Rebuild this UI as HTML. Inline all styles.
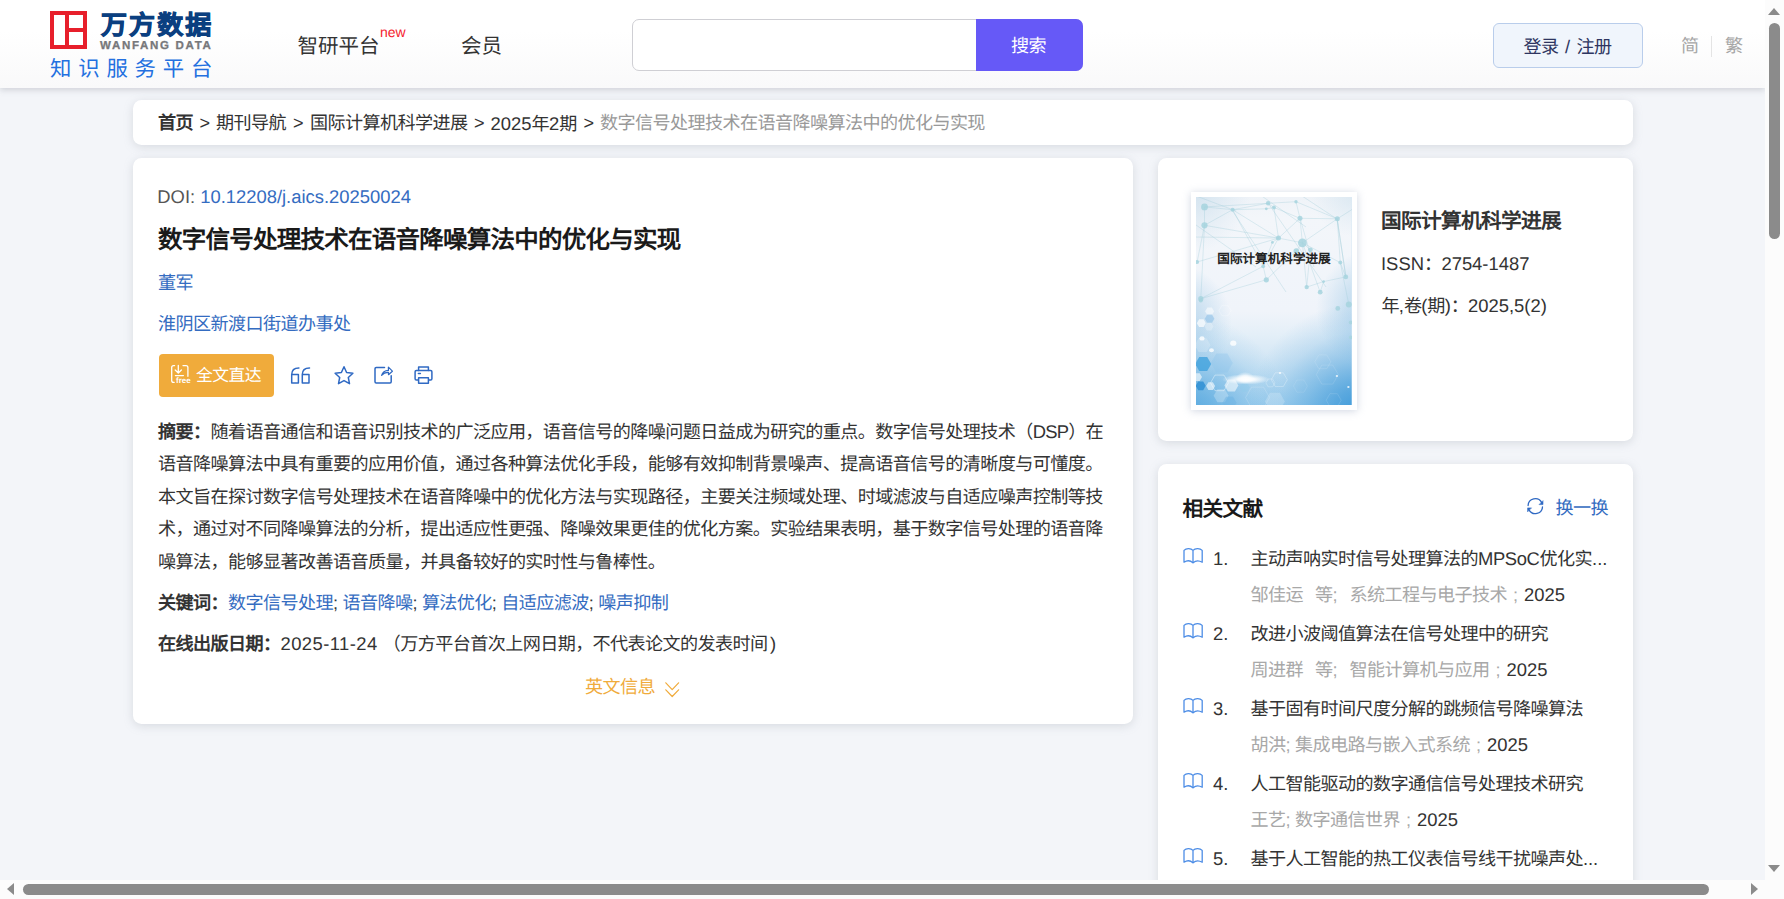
<!DOCTYPE html>
<html lang="zh-CN">
<head>
<meta charset="utf-8">
<title>数字信号处理技术在语音降噪算法中的优化与实现</title>
<style>
*{box-sizing:border-box;margin:0;padding:0}
html,body{width:1784px;height:899px;overflow:hidden}
body{position:relative;text-rendering:geometricPrecision;background:#f3f5f9;font-family:"Liberation Sans",sans-serif;font-size:18.1px;letter-spacing:-.6px;color:#333;line-height:1}
a{text-decoration:none;color:inherit}
.abs{position:absolute}
/* header */
#hdr{position:absolute;left:0;top:0;width:1765px;height:88px;background:linear-gradient(#ffffff,#ffffff 35%,#f9f9fa);box-shadow:0 2px 6px rgba(100,105,120,.25)}
.t{position:absolute;white-space:nowrap}
.card{position:absolute;background:#fff;border-radius:8.5px;box-shadow:0 2px 10px rgba(140,146,160,.27)}
.blue{color:#346cc1}
.b{font-weight:bold}

.l{font-size:18.4px;letter-spacing:0}
.bc{position:absolute;top:0;line-height:47px;white-space:nowrap}
.sep{position:absolute;top:0;line-height:46.5px;width:24px;text-align:center}
.ab{position:absolute;left:25px;white-space:nowrap;line-height:32.5px;height:32.5px}
.lab{font-weight:bold;color:#333}
.kw{color:#346cc1}
/* scrollbars */
#vs{position:absolute;left:1765px;top:0;width:19px;height:880px;background:#fcfcfc}
#hs{position:absolute;left:0;top:880px;width:1784px;height:19px;background:#fcfcfc}
.thumb{position:absolute;background:#8b8b8b;border-radius:6px}
.tri{position:absolute;width:0;height:0}
</style>
</head>
<body>
<div id="hdr">
 <div class="abs" style="left:50px;top:11px;width:37px;height:38px;border:4px solid #e71f2b;background:#fff">
  <div class="abs" style="left:11px;top:0;width:4px;height:30px;background:#e71f2b"></div>
  <div class="abs" style="left:15px;top:13px;width:14px;height:4px;background:#e71f2b"></div>
 </div>
 <div class="t" id="lg1" style="left:101px;top:7.2px;font-size:26px;line-height:36px;font-weight:900;color:#0b3f80;letter-spacing:2.1px;-webkit-text-stroke:.9px #0b3f80">万方数据</div>
 <div class="t" id="lg2" style="left:100px;top:38.5px;font-size:11.5px;line-height:14px;font-weight:bold;color:#77787b;letter-spacing:1.7px;-webkit-text-stroke:.3px #77787b">WANFANG DATA</div>
 <div class="t" id="lg3" style="left:50px;top:55.4px;font-size:21.4px;line-height:28px;color:#2370e0;letter-spacing:6.8px">知识服务平台</div>
 <div class="t" id="nv1" style="letter-spacing:0;left:297.5px;top:33px;font-size:20.5px;line-height:28px;color:#333">智研平台</div>
 <div class="t" id="nv1n" style="letter-spacing:0;left:380px;top:24px;font-size:14px;line-height:16px;color:#f5222d">new</div>
 <div class="t" id="nv2" style="letter-spacing:0;left:461px;top:33px;font-size:20.5px;line-height:28px;color:#333">会员</div>
 <div class="abs" style="left:632px;top:19px;width:451px;height:52px;border:1px solid #cfcfd4;border-radius:7px;background:#fff"></div>
 <div class="abs" style="left:976px;top:19px;width:107px;height:52px;background:#6659f7;border-radius:0 7px 7px 0"></div>
 <div class="t" id="sbt" style="left:1011px;top:33px;font-size:18.1px;line-height:26px;color:#fff">搜索</div>
 <div class="abs" style="left:1493px;top:23px;width:150px;height:45px;border:1px solid #b9cdeb;border-radius:6px;background:#f0f5fc"></div>
 <div class="t" id="lgn" style="left:1523.5px;top:34.2px;font-size:18.1px;line-height:26px;color:#2e3561;word-spacing:2px">登录 <span class="l">/</span> 注册</div>
 <div class="t" id="jf1" style="left:1681px;top:33px;font-size:18.1px;line-height:26px;color:#a6a6a6">简</div>
 <div class="abs" style="left:1711px;top:36px;width:1px;height:21px;background:#e4e4e4"></div>
 <div class="t" id="jf2" style="left:1725px;top:33px;font-size:18.1px;line-height:26px;color:#a6a6a6">繁</div>
</div>

<div class="card" id="bcd" style="left:133px;top:100px;width:1500px;height:45px;color:#333">
 <span class="bc b" style="left:25px;color:#333">首页</span><span class="sep" style="left:59.5px">&gt;</span>
 <span class="bc" style="left:83px">期刊导航</span><span class="sep" style="left:153px">&gt;</span>
 <span class="bc" style="left:177px">国际计算机科学进展</span><span class="sep" style="left:334px">&gt;</span>
 <span class="bc" style="left:357.5px"><span class="l">2025</span>年<span class="l">2</span>期</span><span class="sep" style="left:443.5px">&gt;</span>
 <span class="bc" style="left:467px;color:#999">数字信号处理技术在语音降噪算法中的优化与实现</span>
</div>

<div class="card" id="mc" style="left:133px;top:158px;width:1000px;height:565.6px">
 <div class="ab" id="doi" style="top:23px;left:24.3px"><span class="l" style="color:#555">DOI: </span><span class="l blue">10.12208/j.aics.20250024</span></div>
 <div class="ab b" id="ttl" style="top:62.5px;font-size:24.5px;letter-spacing:-.75px;line-height:40px;height:40px;color:#1a1a1a">数字信号处理技术在语音降噪算法中的优化与实现</div>
 <div class="ab blue" id="au" style="top:109px">董军</div>
 <div class="ab blue" id="af" style="top:150px">淮阴区新渡口街道办事处</div>
 <div class="abs" id="btn" style="left:26px;top:196px;width:115px;height:43px;background:#f0ab3b;border-radius:4px"></div>
 <div class="t b" id="fre" style="letter-spacing:0;left:43px;top:218px;font-size:8px;line-height:10px;color:#fff">free</div>
 <div class="t" id="btt" style="left:63px;top:205px;font-size:16.8px;letter-spacing:-.55px;line-height:26px;color:#fff">全文直达</div>
 <div class="ab" id="a1" style="top:257.5px"><span class="lab">摘要：</span>随着语音通信和语音识别技术的广泛应用，语音信号的降噪问题日益成为研究的重点。数字信号处理技术（<span class="l" style="letter-spacing:-.8px">DSP</span>）在</div>
 <div class="ab" id="a2" style="top:290px">语音降噪算法中具有重要的应用价值，通过各种算法优化手段，能够有效抑制背景噪声、提高语音信号的清晰度与可懂度。</div>
 <div class="ab" id="a3" style="top:322.5px">本文旨在探讨数字信号处理技术在语音降噪中的优化方法与实现路径，主要关注频域处理、时域滤波与自适应噪声控制等技</div>
 <div class="ab" id="a4" style="top:355px">术，通过对不同降噪算法的分析，提出适应性更强、降噪效果更佳的优化方案。实验结果表明，基于数字信号处理的语音降</div>
 <div class="ab" id="a5" style="top:387.5px">噪算法，能够显著改善语音质量，并具备较好的实时性与鲁棒性。</div>
 <div class="ab" id="kwd" style="top:428.5px;word-spacing:.6px"><span class="lab">关键词：</span><span class="kw">数字信号处理</span>; <span class="kw">语音降噪</span>; <span class="kw">算法优化</span>; <span class="kw">自适应滤波</span>; <span class="kw">噪声抑制</span></div>
 <div class="ab" id="pd" style="top:470px"><span class="lab">在线出版日期：</span><span class="l" style="letter-spacing:.45px">2025-11-24</span><span style="margin-left:5px">（</span>万方平台首次上网日期，不代表论文的发表时间<span class="l" style="margin-left:2.5px">)</span></div>
 <div class="t" id="en" style="left:452px;top:513px;line-height:32.5px;color:#f0ab3b">英文信息</div>
</div>

<div class="card" id="rc1" style="left:1158px;top:158px;width:475px;height:283px">
 <div class="abs" id="cov" style="left:33px;top:34px;width:166px;height:218px;background:#fff;box-shadow:0 1px 8px rgba(150,165,190,.45)">
  <div class="abs" id="covi" style="left:5.2px;top:4.6px;width:155.6px;height:208.4px;overflow:hidden;background:#cfe4f2"><svg class="abs" style="left:0;top:0" width="155.6" height="208.4" viewBox="0 0 155.6 208.4"><defs><linearGradient id="cg0" x1="0" y1="0" x2="0" y2="1"><stop offset="0" stop-color="#eff3f8"/><stop offset=".1" stop-color="#f3f6fa"/><stop offset=".55" stop-color="#f0f4fa"/><stop offset=".66" stop-color="#e4eff8"/><stop offset=".77" stop-color="#d4e7f5"/><stop offset=".926" stop-color="#b7daf1"/><stop offset="1" stop-color="#a8d3ef"/></linearGradient><radialGradient id="cg1" gradientUnits="userSpaceOnUse" cx="166" cy="220" r="115"><stop offset="0" stop-color="#3a97d8" stop-opacity="1"/><stop offset="0.25" stop-color="#3a97d8" stop-opacity="0.74"/><stop offset="0.5" stop-color="#3a97d8" stop-opacity="0.42"/><stop offset="0.75" stop-color="#3a97d8" stop-opacity="0.15"/><stop offset="1" stop-color="#3a97d8" stop-opacity="0"/></radialGradient><radialGradient id="cg2" gradientUnits="userSpaceOnUse" cx="-8" cy="218" r="100"><stop offset="0" stop-color="#58a9df" stop-opacity="1"/><stop offset="0.25" stop-color="#58a9df" stop-opacity="0.74"/><stop offset="0.5" stop-color="#58a9df" stop-opacity="0.42"/><stop offset="0.75" stop-color="#58a9df" stop-opacity="0.15"/><stop offset="1" stop-color="#58a9df" stop-opacity="0"/></radialGradient><radialGradient id="cg4" gradientUnits="userSpaceOnUse" cx="-22" cy="125" r="58"><stop offset="0" stop-color="#b5d5ec" stop-opacity="1"/><stop offset="0.5" stop-color="#b5d5ec" stop-opacity="0.6"/><stop offset="1" stop-color="#b5d5ec" stop-opacity="0"/></radialGradient><radialGradient id="cg5" gradientUnits="userSpaceOnUse" cx="180" cy="112" r="60"><stop offset="0" stop-color="#b2d4ec" stop-opacity="1"/><stop offset="0.5" stop-color="#b2d4ec" stop-opacity="0.6"/><stop offset="1" stop-color="#b2d4ec" stop-opacity="0"/></radialGradient><radialGradient id="cg6" gradientUnits="userSpaceOnUse" cx="-5" cy="-5" r="60"><stop offset="0" stop-color="#cfe1ee" stop-opacity="0.9"/><stop offset="1" stop-color="#cfe1ee" stop-opacity="0"/></radialGradient><radialGradient id="cg7" gradientUnits="userSpaceOnUse" cx="160" cy="-5" r="45"><stop offset="0" stop-color="#d5e5f0" stop-opacity="0.8"/><stop offset="1" stop-color="#d5e5f0" stop-opacity="0"/></radialGradient><radialGradient id="cg3" cx=".5" cy=".5" r=".5"><stop offset="0" stop-color="#fff"/><stop offset=".35" stop-color="#fff" stop-opacity=".9"/><stop offset="1" stop-color="#fff" stop-opacity="0"/></radialGradient></defs><rect width="155.6" height="208.4" fill="url(#cg0)"/><rect width="155.6" height="208.4" fill="url(#cg6)"/><rect width="155.6" height="208.4" fill="url(#cg7)"/><rect width="155.6" height="208.4" fill="url(#cg4)"/><rect width="155.6" height="208.4" fill="url(#cg5)"/><rect width="155.6" height="208.4" fill="url(#cg2)"/><rect width="155.6" height="208.4" fill="url(#cg1)"/><g stroke="#9ccbd8" stroke-opacity=".33" stroke-width="1" fill="none"><path d="M8.5 9.9 L36.6 12.7 M8.5 9.9 L8.5 28.3 M8.5 28.3 L36.6 12.7 M36.6 12.7 L72.1 6.3 M36.6 12.7 L70.3 11.8 M72.1 6.3 L78.0 10.5 M78.0 10.5 L70.3 11.8 M72.1 6.3 L100.0 4.7 M78.0 10.5 L104.0 21.3 M100.0 4.7 L104.0 21.3 M104.0 21.3 L141.3 21.8 M100.0 4.7 L141.3 21.8 M36.6 12.7 L82.5 41.1 M8.5 28.3 L82.5 41.1 M78.0 10.5 L82.5 41.1 M104.0 21.3 L82.5 41.1 M82.5 41.1 L76.4 45.4 M82.5 41.1 L106.4 45.8 M104.0 21.3 L106.4 45.8 M141.3 21.8 L106.4 45.8 M106.4 45.8 L114.4 52.8 M106.4 45.8 L100.3 54.0 M82.5 41.1 L67.2 69.3 M36.6 12.7 L67.2 69.3 M76.4 45.4 L67.2 69.3 M67.2 69.3 L4.8 101.7 M8.5 28.3 L1.1 65.0 M1.1 65.0 L82.5 41.1 M106.4 45.8 L110.7 90.1 M106.4 45.8 L124.2 95.2 M110.7 90.1 L127.6 84.6 M124.2 95.2 L127.6 84.6 M127.6 84.6 L149.8 79.9 M149.8 79.9 L144.3 65.6 M141.3 21.8 L144.3 65.6 M106.4 45.8 L144.3 65.6 M144.3 65.6 L152.8 107.4 M114.4 52.8 L110.7 90.1 M70.3 82.8 L67.2 69.3 M4.8 101.7 L70.3 82.8 M8.5 9.9 L72.1 6.3 M8.5 28.3 L4.8 101.7 M141.3 21.8 L149.8 79.9 M100.3 54.0 L70.3 82.8 M-5.0 -3.0 L40.0 14.0 M60.0 -5.0 L110.0 30.0 M100.0 -5.0 L141.0 22.0 M141.0 22.0 L160.0 10.0 M36.0 13.0 L90.0 95.0 M72.0 6.0 L130.0 90.0 M104.0 21.0 L118.0 70.0 M141.0 22.0 L150.0 80.0 M-3.0 40.0 L82.0 41.0 M0.0 28.0 L60.0 70.0"/></g><g fill="#a6d3de" fill-opacity=".85"><circle cx="8.5" cy="9.9" r="3.4"/><circle cx="8.5" cy="28.3" r="3.1"/><circle cx="36.6" cy="12.7" r="2.0"/><circle cx="72.1" cy="6.3" r="2.2"/><circle cx="78.0" cy="10.5" r="1.9"/><circle cx="70.3" cy="11.8" r="1.4"/><circle cx="100.0" cy="4.7" r="1.7"/><circle cx="104.0" cy="21.3" r="2.5"/><circle cx="141.3" cy="21.8" r="2.5"/><circle cx="82.5" cy="41.1" r="2.5"/><circle cx="76.4" cy="45.4" r="1.4"/><circle cx="106.4" cy="45.8" r="4.4"/><circle cx="100.3" cy="54.0" r="2.8"/><circle cx="114.4" cy="52.8" r="2.4"/><circle cx="70.3" cy="82.8" r="2.6"/><circle cx="110.7" cy="90.1" r="2.2"/><circle cx="124.2" cy="95.2" r="2.4"/><circle cx="127.6" cy="84.6" r="1.4"/><circle cx="149.8" cy="79.9" r="2.4"/><circle cx="144.3" cy="65.6" r="2.0"/><circle cx="67.2" cy="69.3" r="1.9"/><circle cx="1.1" cy="65.0" r="2.0"/><circle cx="4.8" cy="101.7" r="2.6"/><circle cx="152.8" cy="107.4" r="3.0"/><circle cx="141.8" cy="111.4" r="2.4"/><circle cx="154.8" cy="125.4" r="2.0"/><circle cx="154.8" cy="140.4" r="1.8"/><circle cx="4.8" cy="103.4" r="2.0"/></g><polygon points="18.1,114.3 15.9,118.2 11.4,118.2 9.1,114.3 11.4,110.4 15.9,110.4" fill="#fff" fill-opacity="0.55"/><polygon points="18.4,121.7 16.0,125.8 11.2,125.8 8.8,121.7 11.2,117.5 16.0,117.5" fill="#8fc1e8" fill-opacity="0.60"/><polygon points="9.8,126.2 7.6,130.1 3.1,130.1 0.8,126.2 3.1,122.3 7.6,122.3" fill="#fff" fill-opacity="0.70"/><polygon points="17.5,129.6 15.2,133.5 10.7,133.5 8.5,129.6 10.7,125.7 15.2,125.7" fill="#fff" fill-opacity="0.25"/><polygon points="14.6,148.2 10.6,155.1 2.6,155.1 -1.4,148.2 2.6,141.2 10.6,141.2" fill="#fff" fill-opacity="0.20"/><polygon points="15.2,167.0 11.2,173.9 3.2,173.9 -0.8,167.0 3.2,160.0 11.2,160.0" fill="#3a9fdc" fill-opacity="0.75"/><polygon points="36.8,166.1 31.3,175.6 20.3,175.6 14.8,166.1 20.3,156.5 31.3,156.5" fill="#8cc4ea" fill-opacity="0.35"/><polygon points="6.0,180.1 3.7,184.0 -0.8,184.0 -3.0,180.1 -0.8,176.2 3.7,176.2" fill="#fff" fill-opacity="0.60"/><polygon points="9.7,188.8 7.2,193.2 2.2,193.2 -0.3,188.8 2.2,184.5 7.2,184.5" fill="#2f8fd4" fill-opacity="0.85"/><polygon points="19.1,189.1 16.9,193.0 12.4,193.0 10.1,189.1 12.4,185.2 16.9,185.2" fill="#fff" fill-opacity="0.60"/><polygon points="42.4,188.5 38.9,194.5 31.9,194.5 28.4,188.5 31.9,182.4 38.9,182.4" fill="#fff" fill-opacity="0.55"/><polygon points="32.6,198.7 28.9,205.2 21.4,205.2 17.6,198.7 21.4,192.2 28.9,192.2" fill="#fff" fill-opacity="0.25"/><polygon points="40.5,205.7 37.0,211.8 30.0,211.8 26.5,205.7 30.0,199.7 37.0,199.7" fill="#6db4e4" fill-opacity="0.50"/><polygon points="88.9,204.4 83.9,213.1 73.9,213.1 68.9,204.4 73.9,195.8 83.9,195.8" fill="#fff" fill-opacity="0.20"/><polygon points="53.8,190.4 51.3,194.7 46.3,194.7 43.8,190.4 46.3,186.0 51.3,186.0" fill="#8fcaec" fill-opacity="0.40"/><polygon points="32.5,185.9 28.0,193.7 19.0,193.7 14.5,185.9 19.0,178.1 28.0,178.1" fill="none" stroke="#fff" stroke-opacity="0.50" stroke-width=".8"/><polygon points="91.3,182.7 87.3,189.6 79.3,189.6 75.3,182.7 79.3,175.8 87.3,175.8" fill="none" stroke="#fff" stroke-opacity="0.35" stroke-width=".8"/><polygon points="78.9,185.9 76.6,189.8 72.1,189.8 69.9,185.9 72.1,182.0 76.6,182.0" fill="none" stroke="#fff" stroke-opacity="0.30" stroke-width=".8"/><polygon points="73.6,200.6 67.6,211.0 55.6,211.0 49.6,200.6 55.6,190.2 67.6,190.2" fill="none" stroke="#fff" stroke-opacity="0.20" stroke-width=".8"/><polygon points="134.8,164.8 130.8,171.7 122.8,171.7 118.8,164.8 122.8,157.9 130.8,157.9" fill="none" stroke="#fff" stroke-opacity="0.15" stroke-width=".8"/><polygon points="142.3,177.6 136.8,187.1 125.8,187.1 120.3,177.6 125.8,168.1 136.8,168.1" fill="none" stroke="#fff" stroke-opacity="0.15" stroke-width=".8"/><polygon points="111.4,189.1 107.9,195.2 100.9,195.2 97.4,189.1 100.9,183.0 107.9,183.0" fill="none" stroke="#fff" stroke-opacity="0.12" stroke-width=".8"/><polygon points="145.2,203.2 141.4,209.7 133.9,209.7 130.2,203.2 133.9,196.7 141.4,196.7" fill="none" stroke="#fff" stroke-opacity="0.15" stroke-width=".8"/><polygon points="35.0,113.6 32.0,118.8 26.0,118.8 23.0,113.6 26.0,108.4 32.0,108.4" fill="none" stroke="#fff" stroke-opacity="0.30" stroke-width=".8"/><ellipse cx="6.0" cy="141.4" rx="2.6" ry="2.2" fill="#fff" fill-opacity=".8"/><ellipse cx="15.5" cy="153.3" rx="2.4" ry="2.0" fill="#fff" fill-opacity=".8"/><ellipse cx="37.3" cy="146.2" rx="3.1" ry="2.6" fill="#fff" fill-opacity=".8"/><ellipse cx="140.9" cy="179.1" rx="1.2" ry="1.0" fill="#fff" fill-opacity=".8"/><ellipse cx="152.4" cy="190.1" rx="1.2" ry="1.0" fill="#fff" fill-opacity=".8"/><ellipse cx="84.0" cy="176.1" rx="1.2" ry="1.0" fill="#fff" fill-opacity=".8"/><ellipse cx="50.1" cy="182.4" rx="24" ry="5.2" fill="url(#cg3)"/><ellipse cx="49.1" cy="180.9" rx="9" ry="6" fill="url(#cg3)" fill-opacity=".8"/></svg></div>
  <div class="t b" id="covt" style="letter-spacing:0;left:0;width:166px;text-align:center;top:57.3px;font-size:12.6px;line-height:20px;color:#222">国际计算机科学进展</div>
 </div>
 <div class="t b" id="jt" style="left:223px;top:48.8px;font-size:20.7px;letter-spacing:-.7px;line-height:30px;color:#333">国际计算机科学进展</div>
 <div class="t" id="issn" style="left:223px;top:90.7px;line-height:30px"><span class="l">ISSN</span>：<span class="l">2754-1487</span></div>
 <div class="t" id="yv" style="left:223.5px;top:133px;line-height:30px;letter-spacing:-.8px">年<span class="l">,</span>卷<span class="l">(</span>期<span class="l">)</span>：<span class="l">2025,5(2)</span></div>
</div>

<div class="card" id="rc2" style="left:1158px;top:464px;width:475px;height:440px"><div class="abs" style="left:0;top:1px">
 <div class="t b" id="rt" style="left:24.5px;top:30px;font-size:20.7px;letter-spacing:-.7px;line-height:30px;color:#1a1a1a">相关文献</div>
 <div class="t l" style="left:55px;top:77.5px;line-height:32.5px">1.</div>
 <div class="t" style="left:92.5px;top:77.5px;line-height:32.5px;color:#333">主动声呐实时信号处理算法的<span class="l" style="letter-spacing:-.35px">MPSoC</span>优化实<span class="l">...</span></div>
 <div class="t" style="left:92.5px;top:114.2px;line-height:32.5px;color:#a8a8a8">邹佳运</div>
 <div class="t" style="left:157.0px;top:114.2px;line-height:32.5px;color:#a8a8a8">等<span class="l">;</span></div>
 <div class="t" style="left:191.5px;top:114.2px;line-height:32.5px;color:#a8a8a8">系统工程与电子技术</div>
 <div class="t" style="left:355.0px;top:114.2px;line-height:32.5px;color:#a8a8a8">;</div>
 <div class="t l" style="left:366.0px;top:114.2px;line-height:32.5px;color:#333">2025</div>
 <div class="t l" style="left:55px;top:152.5px;line-height:32.5px">2.</div>
 <div class="t" style="left:92.5px;top:152.5px;line-height:32.5px;color:#333">改进小波阈值算法在信号处理中的研究</div>
 <div class="t" style="left:92.5px;top:189.2px;line-height:32.5px;color:#a8a8a8">周进群</div>
 <div class="t" style="left:157.0px;top:189.2px;line-height:32.5px;color:#a8a8a8">等<span class="l">;</span></div>
 <div class="t" style="left:191.5px;top:189.2px;line-height:32.5px;color:#a8a8a8">智能计算机与应用</div>
 <div class="t" style="left:337.5px;top:189.2px;line-height:32.5px;color:#a8a8a8">;</div>
 <div class="t l" style="left:348.5px;top:189.2px;line-height:32.5px;color:#333">2025</div>
 <div class="t l" style="left:55px;top:227.5px;line-height:32.5px">3.</div>
 <div class="t" style="left:92.5px;top:227.5px;line-height:32.5px;color:#333">基于固有时间尺度分解的跳频信号降噪算法</div>
 <div class="t" style="left:92.5px;top:264.2px;line-height:32.5px;color:#a8a8a8">胡洪<span class="l">;</span></div>
 <div class="t" style="left:137.0px;top:264.2px;line-height:32.5px;color:#a8a8a8">集成电路与嵌入式系统</div>
 <div class="t" style="left:318.0px;top:264.2px;line-height:32.5px;color:#a8a8a8">;</div>
 <div class="t l" style="left:329.0px;top:264.2px;line-height:32.5px;color:#333">2025</div>
 <div class="t l" style="left:55px;top:302.5px;line-height:32.5px">4.</div>
 <div class="t" style="left:92.5px;top:302.5px;line-height:32.5px;color:#333">人工智能驱动的数字通信信号处理技术研究</div>
 <div class="t" style="left:92.5px;top:339.2px;line-height:32.5px;color:#a8a8a8">王艺<span class="l">;</span></div>
 <div class="t" style="left:137.0px;top:339.2px;line-height:32.5px;color:#a8a8a8">数字通信世界</div>
 <div class="t" style="left:248.0px;top:339.2px;line-height:32.5px;color:#a8a8a8">;</div>
 <div class="t l" style="left:259.0px;top:339.2px;line-height:32.5px;color:#333">2025</div>
 <div class="t l" style="left:55px;top:377.5px;line-height:32.5px">5.</div>
 <div class="t" style="left:92.5px;top:377.5px;line-height:32.5px;color:#333">基于人工智能的热工仪表信号线干扰噪声处<span class="l">...</span></div>
 <div class="t blue" id="hyh" style="left:397.5px;top:28.2px;line-height:30px">换一换</div>
</div></div>

<svg class="abs" style="left:0;top:0;pointer-events:none" width="1766" height="881" viewBox="0 0 1766 881" fill="none" stroke-linecap="round" stroke-linejoin="round">
 <g stroke="#fff" stroke-width="1.3">
  <path d="M174.6 365.6 H173.6 Q171.7 365.6 171.7 367.5 V380.4 Q171.7 382.3 173.6 382.3 H174.2"/>
  <path d="M183 365.6 H186 Q187.9 365.6 187.9 367.5 V376.3"/>
  <path d="M178.3 365.4 V372.8 M175.2 370 L178.3 373 L181.4 370 M175.4 375.6 H183.4"/>
 </g>
 <g stroke="#2f69c3" stroke-width="1.5">
  <path d="M298.9 367.9 Q291.7 367.9 291.7 374.6 V382.9 H298.4 V374.6 H291.7"/>
  <path d="M309.5 367.9 Q302.3 367.9 302.3 374.6 V382.9 H309 V374.6 H302.3"/>
  <path d="M344.0 366.7 L346.6 372.5 L352.9 373.2 L348.3 377.5 L349.5 383.7 L344.0 380.6 L338.5 383.7 L339.7 377.5 L335.1 373.2 L341.4 372.5 Z"/>
  <path d="M384.5 367.6 H376.2 Q375 367.6 375 368.8 V381.8 Q375 383 376.2 383 H390 Q391.2 383 391.2 381.8 V375.8"/>
  <path stroke-width="1.2" d="M381.6 375.4 Q383 370.6 388.4 370.4 V367.2 L392.4 371.2 L388.5 374.7 V372.4 Q384.2 372.2 381.6 375.4 Z"/>
  <path d="M418.6 370.6 V367 H428.4 V370.6"/>
  <rect x="415.1" y="370.6" width="16.8" height="9.4" rx="1.2"/>
  <rect x="418.6" y="377.8" width="9.8" height="5.5" fill="#fff"/>
  <path d="M418.4 373.4 H420.4"/>
 </g>
 <g stroke="#f0ab3b" stroke-width="1.2">
  <path d="M665.8 682.8 L672.2 689.6 L678.6 682.8 M665.8 689.8 L672.2 696.5 L678.6 689.8"/>
 </g>
 <g stroke="#2f69c3" stroke-width="1.3">
  <path d="M1528.1 505.6 A7.2 7.2 0 0 1 1541.6 502.4"/>
  <path d="M1542.5 506.8 A7.2 7.2 0 0 1 1529 509.9"/>
  <path fill="#2f69c3" stroke-width=".6" d="M1543 501 V504.6 H1539.4 Z"/>
  <path fill="#2f69c3" stroke-width=".6" d="M1527.6 511.5 V507.9 H1531.2 Z"/>
 </g>
 <g stroke="#4d8de6" stroke-width="1.3"><path d="M1193 550.4 C1191 548.4 1186.5 547.9 1184 550.4 V562.2 C1187 560.3 1190.5 560.5 1193 562.9 C1195.5 560.5 1199 560.3 1202.2 562.2 V550.4 C1199.7 547.9 1195 548.4 1193 550.4 V562.9"/><path d="M1193 625.4 C1191 623.4 1186.5 622.9 1184 625.4 V637.2 C1187 635.3 1190.5 635.5 1193 637.9 C1195.5 635.5 1199 635.3 1202.2 637.2 V625.4 C1199.7 622.9 1195 623.4 1193 625.4 V637.9"/><path d="M1193 700.4 C1191 698.4 1186.5 697.9 1184 700.4 V712.2 C1187 710.3 1190.5 710.5 1193 712.9 C1195.5 710.5 1199 710.3 1202.2 712.2 V700.4 C1199.7 697.9 1195 698.4 1193 700.4 V712.9"/><path d="M1193 775.4 C1191 773.4 1186.5 772.9 1184 775.4 V787.2 C1187 785.3 1190.5 785.5 1193 787.9 C1195.5 785.5 1199 785.3 1202.2 787.2 V775.4 C1199.7 772.9 1195 773.4 1193 775.4 V787.9"/><path d="M1193 850.4 C1191 848.4 1186.5 847.9 1184 850.4 V862.2 C1187 860.3 1190.5 860.5 1193 862.9 C1195.5 860.5 1199 860.3 1202.2 862.2 V850.4 C1199.7 847.9 1195 848.4 1193 850.4 V862.9"/></g>
</svg>
<div id="vs">
 <div class="tri" style="left:3px;top:8px;border-left:6.5px solid transparent;border-right:6.5px solid transparent;border-bottom:7px solid #8b8b8b"></div>
 <div class="thumb" style="left:4.3px;top:22.5px;width:10.8px;height:216px"></div>
 <div class="tri" style="left:3px;top:865px;border-left:6.5px solid transparent;border-right:6.5px solid transparent;border-top:7px solid #8b8b8b"></div>
</div>
<div id="hs">
 <div class="tri" style="left:7px;top:3px;border-top:6.5px solid transparent;border-bottom:6.5px solid transparent;border-right:7px solid #8b8b8b"></div>
 <div class="thumb" style="left:23px;top:4px;width:1686px;height:11px"></div>
 <div class="tri" style="left:1751px;top:3px;border-top:6.5px solid transparent;border-bottom:6.5px solid transparent;border-left:7px solid #8b8b8b"></div>
</div>
</body>
</html>
